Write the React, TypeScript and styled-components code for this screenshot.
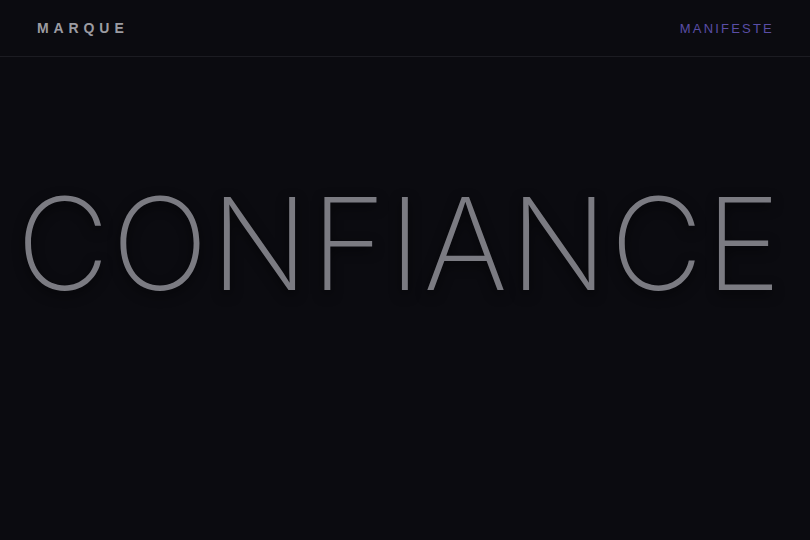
import React from "react";
import styled, { createGlobalStyle } from "styled-components";

const Global = createGlobalStyle`
  html, body { margin: 0; padding: 0; background: #0b0b10; }
  body { font-family: Inter, "Liberation Sans", sans-serif; }
`;

const Page = styled.div`
  width: 810px;
  height: 540px;
  background: #0b0b10;
  display: flex;
  flex-direction: column;
  overflow: hidden;
`;

const Header = styled.header`
  height: 57px;
  box-sizing: border-box;
  border-bottom: 1px solid #1c1c22;
  display: flex;
  align-items: center;
  justify-content: space-between;
  padding: 0 36px 0 37px;
`;

const Brand = styled.div`
  font-family: "Liberation Sans", Arial, sans-serif;
  font-weight: 700;
  font-size: 14px;
  letter-spacing: 4.9px;
  color: #9c9ca2;
`;

const NavLink = styled.a`
  font-family: "Liberation Sans", Arial, sans-serif;
  font-size: 13px;
  letter-spacing: 2.2px;
  color: #5a4ea6;
  text-decoration: none;
`;

const Hero = styled.main`
  flex: 1;
  display: flex;
  justify-content: center;
  padding: 123px 10px 0 0;
`;

const Word = styled.h1`
  margin: 0;
  font-family: Inter, "Liberation Sans", sans-serif;
  font-weight: 240;
  font-size: 128px;
  line-height: 1;
  color: #7b7b82;
  letter-spacing: 2.4px;
  text-shadow: 0 4px 12px rgba(0,0,0,0.6);
`;

export default function App() {
  return (
    <Page>
      <Global />
      <Header>
        <Brand>MARQUE</Brand>
        <NavLink href="#">MANIFESTE</NavLink>
      </Header>
      <Hero>
        <Word>CONFIANCE</Word>
      </Hero>
    </Page>
  );
}
